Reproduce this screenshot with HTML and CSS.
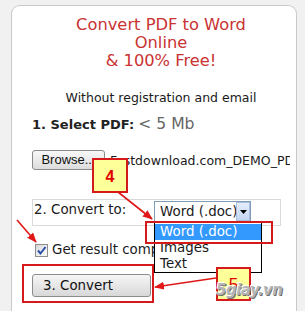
FILE: index.html
```html
<!DOCTYPE html>
<html>
<head>
<meta charset="utf-8">
<link rel="stylesheet" href="styles.css">
</head>
<body>
<div class="card">
  <h1 class="title">Convert PDF to Word<br>Online<br>&amp; 100% Free!</h1>
  <p class="sub">Without registration and email</p>
  <p class="step1"><b>1. Select PDF:</b> <span class="limit">&lt; 5 Mb</span></p>
  <div class="file-row">
    <span class="browse">Browse...</span>
    <span class="fname">Fastdownload.com_DEMO_PDF.pdf</span>
  </div>
  <div class="convert-box">
    <span class="label">2. Convert to:</span>
    <div class="select">
      <span class="sel-text">Word (.doc)</span>
      <span class="sel-btn"><svg width="7" height="4" viewBox="0 0 7 4"><path d="M0 0H7L3.5 4Z" fill="#000"/></svg></span>
      <ul class="dropdown">
        <li class="active">Word (.doc)</li>
        <li>Images</li>
        <li>Text</li>
      </ul>
      <span class="mark mark-option"></span>
    </div>
  </div>
  <div class="check-row">
    <span class="checkbox"><svg width="11" height="11" viewBox="0 0 11 11"><path d="M2 5.5L4.5 8.5L9.5 2" fill="none" stroke="#2b4fa8" stroke-width="2"/></svg></span>
    <span class="check-text">Get result compressed</span>
  </div>
  <div class="btn-wrap">
    <span class="convert-btn">3. Convert</span>
    <span class="mark mark-btn"></span>
  </div>
</div>

<svg class="arrows" width="305" height="311" viewBox="0 0 305 311">
  <defs>
    <marker id="head" markerUnits="userSpaceOnUse" markerWidth="10" markerHeight="8" refX="9" refY="4" orient="auto">
      <path d="M0 0L10 4L0 8Z" fill="#e01818"/>
    </marker>
  </defs>
  <line x1="118" y1="192" x2="152" y2="219" stroke="#e01818" stroke-width="1.6" marker-end="url(#head)"/>
  <line x1="17" y1="220" x2="36" y2="242" stroke="#e01818" stroke-width="1.6" marker-end="url(#head)"/>
  <line x1="216" y1="278" x2="155" y2="287" stroke="#e01818" stroke-width="1.6" marker-end="url(#head)"/>
</svg>

<div class="tag tag4">4</div>
<div class="tag tag5">5</div>
<div class="watermark">5giay.vn</div>
</body>
</html>
```

FILE: styles.css
```css
html, body {
  margin: 0;
  padding: 0;
  overflow: hidden;
}
body {
  position: relative;
  width: 305px;
  height: 311px;
  background: #f1f1f1;
  font-family: "DejaVu Sans", Verdana, sans-serif;
  color: #1a1a1a;
}
.card {
  box-sizing: border-box;
  margin: 5px 0 0 11px;
  width: 286px;
  height: 306px;
  background: #fff;
  border: 1px solid #c9c9c9;
  border-bottom: none;
  border-radius: 9px 9px 0 0;
  padding: 10px 6px 0 20px;
}
.title {
  margin: 0;
  font-size: 16.3px;
  line-height: 18px;
  font-weight: normal;
  color: #c93333;
  text-align: center;
}
.sub {
  margin: 20px 0 0;
  font-size: 12.5px;
  line-height: 15px;
  text-align: center;
}
.step1 {
  margin: 9px 0 0;
  font-size: 13px;
  line-height: 20px;
}
.step1 b {
  color: #222;
}
.limit {
  font-size: 15.6px;
  color: #666;
}
.file-row {
  margin-top: 15px;
  display: flex;
  align-items: center;
  gap: 5px;
  height: 20px;
  overflow: hidden;
  white-space: nowrap;
}
.browse {
  flex: 0 0 auto;
  box-sizing: border-box;
  width: 73px;
  height: 20px;
  border: 1px solid #8a8a8a;
  border-radius: 3px;
  background: linear-gradient(#f8f8f8, #dcdcdc);
  font-family: "Liberation Sans", Arial, sans-serif;
  font-size: 13px;
  line-height: 18px;
  text-align: center;
  color: #111;
}
.fname {
  font-size: 12.5px;
  color: #1a1a1a;
}
.convert-box {
  box-sizing: border-box;
  margin-top: 29px;
  width: 249px;
  height: 27px;
  border: 1px solid #d9d9d9;
  padding: 1px 0 0 1px;
  display: flex;
  align-items: flex-start;
}
.label {
  flex: 0 0 120px;
  font-size: 13.4px;
  line-height: 18px;
}
.select {
  position: relative;
  z-index: 2;
  box-sizing: border-box;
  width: 97px;
  height: 21px;
  border: 1px solid #7f9db9;
  display: flex;
  background: #fff;
}
.sel-text {
  flex: 1;
  overflow: hidden;
  white-space: nowrap;
  padding-left: 5px;
  font-size: 13.4px;
  line-height: 19px;
}
.sel-btn {
  flex: 0 0 14px;
  display: flex;
  align-items: center;
  justify-content: center;
  box-sizing: border-box;
  border: 1px solid #a9bfdc;
  background: linear-gradient(#e6eefb, #c3d5f2);
}
.dropdown {
  position: absolute;
  top: 20px;
  left: -1px;
  box-sizing: border-box;
  width: 108px;
  height: 51px;
  margin: 0;
  padding: 1px 0 0;
  list-style: none;
  background: #fff;
  border: 1px solid #000;
}
.dropdown li {
  height: 16px;
  padding-left: 5px;
  font-size: 13.4px;
  line-height: 16px;
  white-space: nowrap;
}
.dropdown li.active {
  background: #3399ff;
  color: #fff;
}
.mark {
  position: absolute;
  box-sizing: border-box;
  border: 2px solid #d41a1a;
}
.mark-option {
  left: -10px;
  top: 19px;
  width: 128px;
  height: 23px;
}
.check-row {
  margin: 16px 0 0 3px;
  display: flex;
  align-items: center;
  gap: 4px;
  height: 16px;
  white-space: nowrap;
}
.checkbox {
  flex: 0 0 auto;
  box-sizing: border-box;
  width: 13px;
  height: 13px;
  border: 1px solid #8e8e8e;
  background: linear-gradient(135deg, #d8d8d8, #fdfdfd);
  display: flex;
  align-items: center;
  justify-content: center;
}
.check-text {
  max-width: 102px;
  overflow: hidden;
  font-size: 13.4px;
  line-height: 16px;
}
.btn-wrap {
  position: relative;
  margin-top: 16px;
  width: 119px;
  height: 23px;
}
.convert-btn {
  display: block;
  box-sizing: border-box;
  width: 119px;
  height: 23px;
  border: 1px solid #8d8d8d;
  border-radius: 3px;
  background: linear-gradient(#f6f6f6, #d8d8d8);
  padding-left: 10px;
  font-size: 13.4px;
  line-height: 21px;
  color: #111;
}
.mark-btn {
  left: -10px;
  top: -10px;
  width: 132px;
  height: 39px;
}
.arrows {
  position: absolute;
  left: 0;
  top: 0;
  z-index: 5;
  pointer-events: none;
}
.tag {
  position: absolute;
  z-index: 6;
  box-sizing: border-box;
  border: 2px solid #d41a1a;
  background: #ffff99;
  color: #e00000;
  font-family: "Liberation Sans", Arial, sans-serif;
  display: flex;
  align-items: center;
  justify-content: center;
}
.tag4 {
  left: 92px;
  top: 158px;
  width: 36px;
  height: 35px;
  font-size: 16px;
  font-weight: bold;
  padding-top: 2px;
}
.tag5 {
  left: 216px;
  top: 267px;
  width: 35px;
  height: 34px;
  font-size: 17px;
  padding-top: 2px;
}
.watermark {
  position: absolute;
  z-index: 7;
  left: 216px;
  top: 281px;
  font-family: "DejaVu Sans", Verdana, sans-serif;
  font-size: 15px;
  font-weight: bold;
  font-style: italic;
  letter-spacing: -0.5px;
  color: #b4b4b4;
  text-shadow: -1px -1px 0 #fff, 1px 1px 0 #6f6f6f;
}
```
